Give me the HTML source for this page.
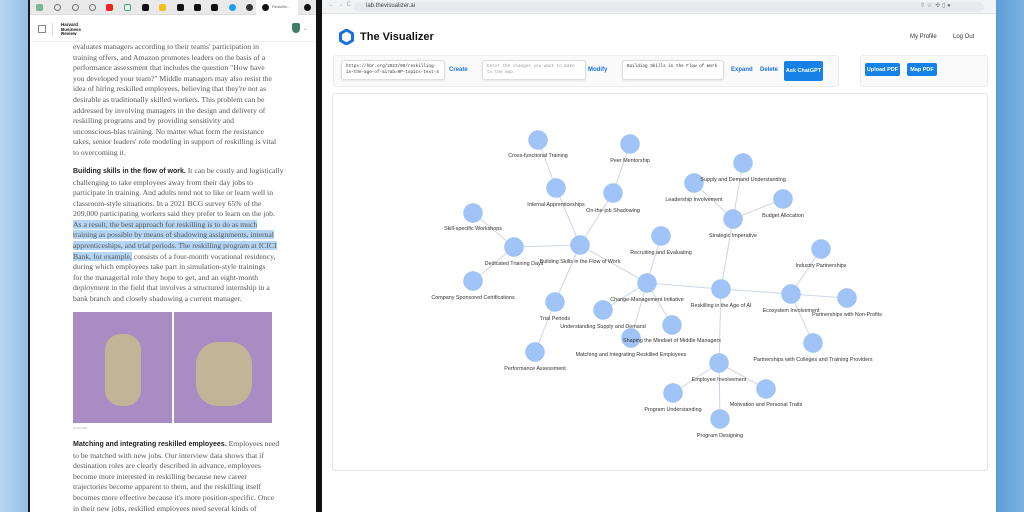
<!DOCTYPE html>
<html><head><meta charset="utf-8"><style>
*{margin:0;padding:0;box-sizing:border-box}
body{width:1024px;height:512px;overflow:hidden;background:#6fa9d8;position:relative;font-family:"Liberation Sans",sans-serif}
.desk{position:absolute;left:0;top:0;width:30px;height:512px;background:linear-gradient(90deg,#b9d7ef,#8fbfe6)}
.deskr{position:absolute;left:996px;top:0;width:28px;height:512px;background:linear-gradient(90deg,#5d9ed6,#79b3e3)}
.lwin{position:absolute;left:28px;top:0;width:290px;height:512px;background:#1a1a1a}
.lin{position:absolute;left:30px;top:0;width:286px;height:512px;background:#fff;overflow:hidden}
.tabs{height:15px;background:#e9e9e9;border-bottom:1px solid #ddd;position:relative}
.tab{position:absolute;top:4px;width:7px;height:7px;border-radius:2px}
.hbr{height:27px;border-bottom:1px solid #eee;position:relative}
.art{position:absolute;left:43px;top:42px;width:215px;font-family:"Liberation Serif",serif;font-size:7.7px;line-height:10.6px;color:#555;white-space:nowrap}
.art b{color:#222;font-family:"Liberation Sans",sans-serif;font-size:7px}
.art p{margin-bottom:7.4px}
.hl{background:#b4d5f5}
.div{position:absolute;left:316px;top:0;width:6px;height:512px;background:#111}
.rwin{position:absolute;left:322px;top:0;width:674px;height:512px;background:#fff}
.bar{height:14px;background:#f1f3f4;border-bottom:1px solid #e2e2e2;position:relative;font-size:6px;color:#444}
.card{position:absolute;background:#fafafa;border:1px solid #ececec;border-radius:3px}
.ta{position:absolute;background:#fff;border:1px solid #ddd;border-radius:3px;font-family:"Liberation Mono",monospace;font-size:4.3px;line-height:5.5px;color:#333;padding:3px 4px;box-shadow:0 1px 2px rgba(0,0,0,.1)}
.lk{position:absolute;font-size:6px;color:#1a73e8;font-weight:bold}
.btn{position:absolute;background:#1681e6;color:#fff;font-size:5.5px;font-weight:bold;display:flex;align-items:center;justify-content:center;border-radius:2px}
svg text{font-family:"Liberation Sans",sans-serif;font-size:5.4px;fill:#333;text-anchor:middle}
</style></head><body>
<div class="desk"></div><div class="deskr"></div>
<div class="lwin"></div>
<div class="lin">
 <div class="tabs">
  <div class="tab" style="left:6px;background:#7bb89b"></div><div class="tab" style="left:24px;border:1px solid #777;border-radius:50%"></div><div class="tab" style="left:42px;border:1px solid #777;border-radius:50%"></div><div class="tab" style="left:59px;border:1px solid #777;border-radius:50%"></div><div class="tab" style="left:76px;background:#e22"></div><div class="tab" style="left:94px;background:#eee;border:1px solid #4a8"></div><div class="tab" style="left:112px;background:#111"></div><div class="tab" style="left:129px;background:#f2c21b"></div><div class="tab" style="left:147px;background:#111"></div><div class="tab" style="left:164px;background:#111"></div><div class="tab" style="left:181px;background:#111"></div><div class="tab" style="left:199px;background:#1d9bf0;border-radius:50%"></div><div class="tab" style="left:216px;background:#333;border-radius:50%"></div>
  <div style="position:absolute;left:226px;top:0;width:42px;height:15px;background:#fff"></div><div class="tab" style="left:232px;background:#111;border-radius:50%"></div><div style="position:absolute;left:242px;top:4px;font-size:4px;color:#666">Reskillin...</div><div class="tab" style="left:274px;background:#111;border-radius:50%"></div>
 </div>
 <div class="hbr">
  <div style="position:absolute;left:8px;top:10px;width:8px;height:8px;border:1px solid #888"></div>
  <div style="position:absolute;left:22px;top:8px;width:1px;height:12px;background:#ddd"></div>
  <div style="position:absolute;left:31px;top:8px;font-size:4.5px;font-weight:bold;line-height:4.6px;color:#111">Harvard<br>Business<br>Review</div>
  <div style="position:absolute;left:262px;top:8px;width:8px;height:10px;background:#3f7d6a;border-radius:2px 2px 4px 4px"></div>
  <div style="position:absolute;left:273px;top:10px;font-size:6px;color:#999">⌄</div>
 </div>
 <div class="art">
  <p>evaluates managers according to their teams' participation in<br>training offers, and Amazon promotes leaders on the basis of a<br>performance assessment that includes the question "How have<br>you developed your team?" Middle managers may also resist the<br>idea of hiring reskilled employees, believing that they're not as<br>desirable as traditionally skilled workers. This problem can be<br>addressed by involving managers in the design and delivery of<br>reskilling programs and by providing sensitivity and<br>unconscious-bias training. No matter what form the resistance<br>takes, senior leaders' role modeling in support of reskilling is vital<br>to overcoming it.</p>
  <p><b>Building skills in the flow of work.</b> It can be costly and logistically<br>challenging to take employees away from their day jobs to<br>participate in training. And adults tend not to like or learn well in<br>classroom-style situations. In a 2021 BCG survey 65% of the<br>209,000 participating workers said they prefer to learn on the job.<br><span class="hl">As a result, the best approach for reskilling is to do as much<br>training as possible by means of shadowing assignments, internal<br>apprenticeships, and trial periods. The reskilling program at ICICI<br>Bank, for example,</span> consists of a four-month vocational residency,<br>during which employees take part in simulation-style trainings<br>for the managerial role they hope to get, and an eight-month<br>deployment in the field that involves a structured internship in a<br>bank branch and closely shadowing a current manager.</p>
  <div style="display:flex;gap:2px;height:111px;margin-top:6px;width:199px"><div style="flex:1;background:#a88cc3;position:relative"><div style="position:absolute;left:32px;top:22px;width:36px;height:72px;background:#c2b497;border-radius:16px"></div></div><div style="flex:1;background:#a88cc3;position:relative"><div style="position:absolute;left:22px;top:30px;width:56px;height:64px;background:#c2b497;border-radius:22px"></div></div></div>
  <div style="font-size:3.5px;line-height:5px;color:#aaa;margin:3px 0 8px">Noma Bar</div>
  <p><b>Matching and integrating reskilled employees.</b> Employees need<br>to be matched with new jobs. Our interview data shows that if<br>destination roles are clearly described in advance, employees<br>become more interested in reskilling because new career<br>trajectories become apparent to them, and the reskilling itself<br>becomes more effective because it's more position-specific. Once<br>in their new jobs, reskilled employees need several kinds of</p>
 </div>
</div>
<div class="div"></div>
<div class="rwin">
 <div class="bar"><span style="position:absolute;left:6px;top:2px;color:#aaa">←&nbsp;&nbsp;→&nbsp;&nbsp;C</span><div style="position:absolute;left:32px;top:2px;width:630px;height:10px;background:#e8eaed;border-radius:5px"></div><span style="position:absolute;left:44px;top:3px">lab.thevisualizer.ai</span><span style="position:absolute;left:598px;top:2px;color:#777">⇧ ☆ &nbsp;✣ ▯ ●</span></div>
 <svg style="position:absolute;left:17px;top:29px" width="15" height="16" viewBox="0 0 15 16"><path d="M7.5 1L13.5 4.5V11.5L7.5 15L1.5 11.5V4.5Z" fill="none" stroke="#1a6fe0" stroke-width="3" stroke-linejoin="round"/></svg>
 <div style="position:absolute;left:38px;top:31px;font-size:11px;font-weight:bold;color:#111">The Visualizer</div>
 <div style="position:absolute;left:588px;top:34px;font-size:6px;color:#333">My Profile</div>
 <div style="position:absolute;left:631px;top:34px;font-size:6px;color:#333">Log Out</div>
 <div class="card" style="left:11px;top:55px;width:506px;height:32px"></div>
 <div class="card" style="left:538px;top:55px;width:128px;height:32px"></div>
 <div class="ta" style="left:19px;top:60px;width:104px;height:20px">https://hbr.org/2023/09/reskilling-in-the-age-of-ai?ab=HP-topics-text-4</div>
 <div class="lk" style="left:127px;top:67px">Create</div>
 <div class="ta" style="left:160px;top:60px;width:104px;height:20px;color:#999">Enter the changes you want to make to the map</div>
 <div class="lk" style="left:266px;top:67px">Modify</div>
 <div class="ta" style="left:300px;top:60px;width:102px;height:20px">Building Skills in the Flow of Work</div>
 <div class="lk" style="left:409px;top:67px">Expand</div>
 <div class="lk" style="left:438px;top:67px">Delete</div>
 <div class="btn" style="left:462px;top:61px;width:39px;height:20px">Ask ChatGPT</div>
 <div class="btn" style="left:543px;top:63px;width:35px;height:13px">Upload PDF</div>
 <div class="btn" style="left:585px;top:63px;width:30px;height:13px">Map PDF</div>
 <div style="position:absolute;left:10px;top:93px;width:656px;height:378px;border:1px solid #e4e4e4;border-radius:3px;background:#fff"></div>
</div>
<svg style="position:absolute;left:0;top:0" width="1024" height="512">
<g stroke="#cdd6e2" stroke-width="1">
<line x1="538" y1="140" x2="556" y2="188"/><line x1="556" y1="188" x2="580" y2="245"/><line x1="630" y1="144" x2="613" y2="193"/><line x1="613" y1="193" x2="580" y2="245"/><line x1="473" y1="213" x2="514" y2="247"/><line x1="514" y1="247" x2="580" y2="245"/><line x1="473" y1="281" x2="514" y2="247"/><line x1="580" y1="245" x2="647" y2="283"/><line x1="580" y1="245" x2="555" y2="302"/><line x1="555" y1="302" x2="535" y2="352"/><line x1="647" y1="283" x2="661" y2="236"/><line x1="647" y1="283" x2="721" y2="289"/><line x1="647" y1="283" x2="631" y2="338"/><line x1="647" y1="283" x2="672" y2="325"/><line x1="647" y1="283" x2="603" y2="310"/><line x1="721" y1="289" x2="733" y2="219"/><line x1="733" y1="219" x2="694" y2="183"/><line x1="733" y1="219" x2="743" y2="163"/><line x1="733" y1="219" x2="783" y2="199"/><line x1="721" y1="289" x2="791" y2="294"/><line x1="791" y1="294" x2="821" y2="249"/><line x1="791" y1="294" x2="847" y2="298"/><line x1="791" y1="294" x2="813" y2="343"/><line x1="721" y1="289" x2="719" y2="363"/><line x1="719" y1="363" x2="673" y2="393"/><line x1="719" y1="363" x2="766" y2="389"/><line x1="719" y1="363" x2="720" y2="419"/>
</g>
<g fill="#a0c4f7" stroke="#94bbf2" stroke-width=".5">
<circle cx="538" cy="140" r="9.5"/><circle cx="630" cy="144" r="9.5"/><circle cx="556" cy="188" r="9.5"/><circle cx="613" cy="193" r="9.5"/><circle cx="473" cy="213" r="9.5"/><circle cx="743" cy="163" r="9.5"/><circle cx="694" cy="183" r="9.5"/><circle cx="783" cy="199" r="9.5"/><circle cx="733" cy="219" r="9.5"/><circle cx="514" cy="247" r="9.5"/><circle cx="580" cy="245" r="9.5"/><circle cx="661" cy="236" r="9.5"/><circle cx="821" cy="249" r="9.5"/><circle cx="473" cy="281" r="9.5"/><circle cx="647" cy="283" r="9.5"/><circle cx="721" cy="289" r="9.5"/><circle cx="791" cy="294" r="9.5"/><circle cx="847" cy="298" r="9.5"/><circle cx="555" cy="302" r="9.5"/><circle cx="603" cy="310" r="9.5"/><circle cx="672" cy="325" r="9.5"/><circle cx="631" cy="338" r="9.5"/><circle cx="813" cy="343" r="9.5"/><circle cx="535" cy="352" r="9.5"/><circle cx="719" cy="363" r="9.5"/><circle cx="673" cy="393" r="9.5"/><circle cx="766" cy="389" r="9.5"/><circle cx="720" cy="419" r="9.5"/>
</g>
<g>
<text x="538" y="157">Cross-functional Training</text><text x="630" y="162">Peer Mentorship</text><text x="556" y="206">Internal Apprenticeships</text><text x="613" y="212">On-the-job Shadowing</text><text x="473" y="230">Skill-specific Workshops</text><text x="743" y="181">Supply and Demand Understanding</text><text x="694" y="201">Leadership Involvement</text><text x="783" y="217">Budget Allocation</text><text x="733" y="237">Strategic Imperative</text><text x="514" y="265">Dedicated Training Days</text><text x="580" y="263">Building Skills in the Flow of Work</text><text x="661" y="254">Recruiting and Evaluating</text><text x="821" y="267">Industry Partnerships</text><text x="473" y="299">Company Sponsored Certifications</text><text x="647" y="301">Change-Management Initiative</text><text x="721" y="307">Reskilling in the Age of AI</text><text x="791" y="312">Ecosystem Involvement</text><text x="847" y="316">Partnerships with Non-Profits</text><text x="555" y="320">Trial Periods</text><text x="603" y="328">Understanding Supply and Demand</text><text x="672" y="342">Shaping the Mindset of Middle Managers</text><text x="631" y="356">Matching and Integrating Reskilled Employees</text><text x="813" y="361">Partnerships with Colleges and Training Providers</text><text x="535" y="370">Performance Assessment</text><text x="719" y="381">Employee Involvement</text><text x="673" y="411">Program Understanding</text><text x="766" y="406">Motivation and Personal Traits</text><text x="720" y="437">Program Designing</text>
</g>
</svg>
</body></html>
